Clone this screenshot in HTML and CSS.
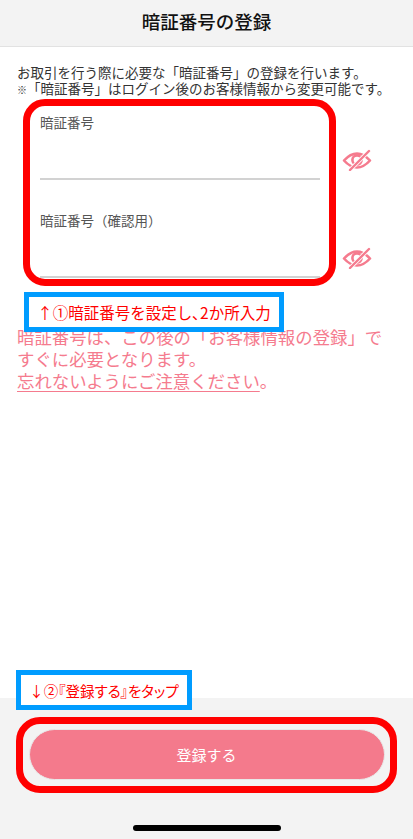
FILE: index.html
```html
<!DOCTYPE html>
<html lang="ja">
<head>
<meta charset="utf-8">
<title>暗証番号の登録</title>
<link rel="stylesheet" href="styles.css">
</head>
<body>
<main class="screen">
  <header class="header"><h1>暗証番号の登録</h1></header>
  <section class="content">
    <p class="intro">お取引を行う際に必要な「暗証番号」の登録を行います。<br><span class="mark">※</span>「暗証番号」はログイン後のお客様情報から変更可能です。</p>
    <div class="fields">
      <div class="field">
        <label class="field-box">暗証番号</label>
        <svg class="eye" viewBox="0 0 30 22"><use href="#eye-off"/></svg>
      </div>
      <div class="field">
        <label class="field-box">暗証番号（確認用）</label>
        <svg class="eye" viewBox="0 0 30 22"><use href="#eye-off"/></svg>
      </div>
    </div>
    <p class="notice">暗証番号は、この後の「お客様情報の登録」で<br>すぐに必要となります。<br><span class="underline">忘れないようにご注意ください</span>。</p>
  </section>
  <footer class="footer">
    <button class="submit" type="button">登録する</button>
    <div class="home-bar"></div>
  </footer>
  <div class="ring ring-fields"></div>
  <div class="tag tag-one">↑①暗証番号を設定し､2か所入力</div>
  <div class="tag tag-two">↓②『登録する』をタップ</div>
  <div class="ring ring-submit"></div>
</main>
<svg class="defs" width="0" height="0">
  <defs>
    <g id="eye-off" fill="none" stroke-linecap="round" stroke-linejoin="round">
      <path stroke="#f57b8e" stroke-width="2.600" d="M2 11.500 C7 6 11 4.500 15 4.500 C19 4.500 23 6 28 11.500 C23 17 19 18.500 15 18.500 C11 18.500 7 17 2 11.500 Z"/>
      <circle stroke="#f57b8e" stroke-width="2.600" cx="15" cy="11" r="4.600"/>
      <path stroke="#fff" stroke-width="4" d="M26 3 L8 21"/>
      <path stroke="#f57b8e" stroke-width="2.400" d="M27 2 L8 21"/>
    </g>
  </defs>
</svg>
</body>
</html>
```
FILE: styles.css
```css
* { box-sizing: border-box; }
html, body { margin: 0; padding: 0; }
body {
  width: 413px;
  height: 839px;
  overflow: hidden;
  background: #fff;
  font-family: "Noto Sans CJK JP", "Noto Sans", sans-serif;
}
.screen {
  position: relative;
  display: flex;
  flex-direction: column;
  width: 413px;
  height: 839px;
}
.header {
  height: 47px;
  display: flex;
  align-items: center;
  justify-content: center;
  background: #f3f3f3;
  border-bottom: 1px solid #e2e2e2;
}
.header h1 {
  margin: 0;
  font-size: 18.500px;
  font-weight: 500;
  line-height: 1;
  color: #111;
  padding-bottom: 4px;
}
.content {
  flex: 1;
  padding: 17px 17px 0;
}
.intro {
  margin: 0;
  font-size: 13.500px;
  line-height: 16px;
  color: #333;
  white-space: nowrap;
}
.mark { font-size: 10px; }
.fields {
  margin-top: 18px;
  padding-left: 23px;
  display: flex;
  flex-direction: column;
  gap: 34px;
}
.field {
  display: flex;
  align-items: center;
  gap: 22px;
}
.field-box {
  display: block;
  width: 280px;
  height: 64px;
  border-bottom: 2px solid #d2d2d2;
  font-size: 13.500px;
  line-height: 12px;
  color: #555;
}
.eye {
  width: 30px;
  height: 22px;
  flex: none;
  margin-top: 24px;
}
.notice {
  margin: 48px 0 0;
  font-size: 17.400px;
  line-height: 22px;
  color: #f57b8e;
  white-space: nowrap;
}
.underline { text-decoration: underline; text-decoration-thickness: 1px; text-underline-offset: 3px; }
.footer {
  position: relative;
  height: 141px;
  background: #f3f3f3;
  display: flex;
  flex-direction: column;
  align-items: center;
  padding-top: 31px;
}
.submit {
  width: 356px;
  height: 51px;
  border: 1px solid #e8e8e8;
  border-radius: 26px;
  background: #f47a8c;
  color: #fff;
  font-family: inherit;
  font-size: 15px;
  padding: 0;
}
.home-bar {
  width: 148px;
  height: 6px;
  margin-top: 45px;
  border-radius: 3px;
  background: #000;
}
.ring {
  position: absolute;
  border: 7px solid #ff0000;
}
.ring-fields { left: 23px; top: 99px; width: 313px; height: 187px; border-radius: 22px; }
.ring-submit { left: 16px; top: 717px; width: 381px; height: 76px; border-radius: 24px; }
.tag {
  position: absolute;
  display: flex;
  align-items: center;
  justify-content: center;
  background: #fff;
  border: 5.500px solid #009cff;
  color: #ff0000;
  font-weight: 400;
  white-space: nowrap;
}
.tag-one { left: 24px; top: 292px; width: 260px; height: 40px; font-size: 15.500px; }
.tag-two { left: 16px; top: 670px; width: 176px; height: 40px; font-size: 14.500px; font-feature-settings: "palt"; }
.defs { position: absolute; }
```
